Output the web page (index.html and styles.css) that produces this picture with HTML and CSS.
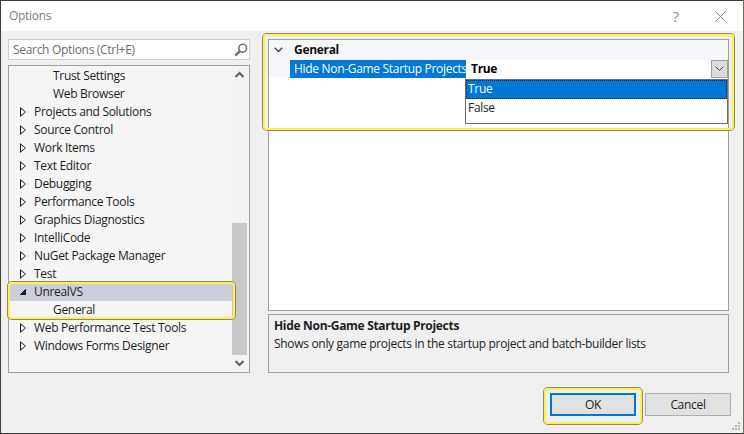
FILE: index.html
```html
<!DOCTYPE html>
<html lang="en">
<head>
<meta charset="utf-8">
<title>Options</title>
<link rel="stylesheet" href="styles.css">
</head>
<body>
<div class="window">
  <header class="titlebar">
    <span class="title">Options</span>
    <span class="help">?</span>
    <svg class="close" width="11" height="11" viewBox="0 0 11 11"><path d="M.5.5l10 10M10.5.5l-10 10" stroke="#8c8c8c" fill="none"/></svg>
  </header>
  <main class="content">
    <section class="left">
      <div class="search">
        <span class="search-text">Search Options (Ctrl+E)</span>
        <svg class="search-icon" width="14" height="14" viewBox="0 0 14 14"><circle cx="8.7" cy="5.2" r="3.9" stroke="#6f6f6f" stroke-width="1.6" fill="none"/><path d="M5.8 8.2L1.3 12.7" stroke="#6f6f6f" stroke-width="2.4" fill="none"/></svg>
      </div>
      <div class="tree">
        <ul class="tree-list">
          <li class="row child">Trust Settings</li>
          <li class="row child">Web Browser</li>
          <li class="row"><i class="arrow"></i>Projects and Solutions</li>
          <li class="row"><i class="arrow"></i>Source Control</li>
          <li class="row"><i class="arrow"></i>Work Items</li>
          <li class="row"><i class="arrow"></i>Text Editor</li>
          <li class="row"><i class="arrow"></i>Debugging</li>
          <li class="row"><i class="arrow"></i>Performance Tools</li>
          <li class="row"><i class="arrow"></i>Graphics Diagnostics</li>
          <li class="row"><i class="arrow"></i>IntelliCode</li>
          <li class="row"><i class="arrow"></i>NuGet Package Manager</li>
          <li class="row"><i class="arrow"></i>Test</li>
          <li class="row selected"><i class="arrow open"></i>UnrealVS</li>
          <li class="row child">General</li>
          <li class="row"><i class="arrow"></i>Web Performance Test Tools</li>
          <li class="row"><i class="arrow"></i>Windows Forms Designer</li>
        </ul>
        <div class="scrollbar">
          <svg class="sb-btn" width="15" height="17" viewBox="0 0 15 17"><path d="M3.5 11l4-4 4 4" stroke="#606060" stroke-width="2" fill="none"/></svg>
          <div class="sb-track"><div class="sb-thumb"></div></div>
          <svg class="sb-btn" width="15" height="17" viewBox="0 0 15 17"><path d="M3.5 6l4 4 4-4" stroke="#606060" stroke-width="2" fill="none"/></svg>
        </div>
      </div>
    </section>
    <section class="right">
      <div class="grid">
        <div class="grid-head">
          <svg class="chev" width="9" height="6" viewBox="0 0 9 6"><path d="M.8.8l3.7 3.7L8.2.8" stroke="#444" stroke-width="1.4" fill="none"/></svg>
          <b>General</b>
        </div>
        <div class="grid-row">
          <div class="gutter"></div>
          <div class="prop-name">Hide Non-Game Startup Projects</div>
          <div class="prop-value"><b>True</b>
            <span class="drop-btn"><svg width="9" height="6" viewBox="0 0 9 6"><path d="M.8.8l3.7 3.7L8.2.8" stroke="#444" fill="none"/></svg></span>
          </div>
        </div>
        <ul class="dropdown">
          <li class="opt active">True</li>
          <li class="opt">False</li>
        </ul>
      </div>
      <div class="desc">
        <b>Hide Non-Game Startup Projects</b>
        <p class="desc-text">Shows only game projects in the startup project and batch-builder lists</p>
      </div>
    </section>
  </main>
  <footer class="footer">
    <button class="btn primary">OK</button>
    <button class="btn">Cancel</button>
  </footer>
  <svg class="grip" width="9" height="9" viewBox="0 0 9 9" fill="#b4b4b4"><rect x="6" y="0" width="2" height="2"/><rect x="3" y="3" width="2" height="2"/><rect x="6" y="3" width="2" height="2"/><rect x="0" y="6" width="2" height="2"/><rect x="3" y="6" width="2" height="2"/><rect x="6" y="6" width="2" height="2"/></svg>
  <div class="mark mark-grid"></div>
  <div class="mark mark-tree"></div>
  <div class="mark mark-ok"></div>
</div>
</body>
</html>
```
FILE: styles.css
```css
* { box-sizing: border-box; }
html, body { margin: 0; padding: 0; }
body { width: 744px; height: 434px; overflow: hidden; background: #6a7048; }
.window {
  position: relative; width: 743px; height: 434px;
  background: #f0f0f0; border: 1px solid #3c3c3c; border-right: 0;
  font: 12px/18px "Open Sans", "Noto Sans", sans-serif; letter-spacing: -0.31px; color: #1e1e1e;
  display: flex; flex-direction: column;
}
.titlebar { height: 30px; background: #fff; display: flex; align-items: center; padding: 0 17px 0 8px; flex: none; }
.title { color: #7b7b7b; flex: 1; }
.help { color: #8c8c8c; font-size: 15px; margin-right: 36px; }
.content { flex: 1; display: flex; padding: 8px 14px 0 7px; gap: 18px; min-height: 0; }
.left { width: 242px; flex: none; display: flex; flex-direction: column; gap: 5px; }
.search { height: 21px; background: #fff; border: 1px solid #cccedb; display: flex; align-items: center; justify-content: space-between; padding: 0 1px 0 4px; color: #6d6d6d; }
.tree { height: 308px; border: 1px solid #a0a0a0; background: #f5f5f5; display: flex; }
.tree-list { list-style: none; margin: 0; padding: 1px 0 0; flex: 1; min-width: 0; }
.row { height: 18px; display: flex; align-items: center; padding: 0 0 0 25px; white-space: nowrap; }
.row.child { padding-left: 44px; }
.row.selected { background: #cccedb; }
.arrow { width: 0; height: 0; margin: -1px 8px 0 -14px; border-left: 6px solid #222; border-top: 5px solid transparent; border-bottom: 5px solid transparent; position: relative; }
.arrow::after { content: ""; position: absolute; left: -5px; top: -3px; border-left: 4px solid #f5f5f5; border-top: 3px solid transparent; border-bottom: 3px solid transparent; }
.arrow.open { width: 7px; height: 7px; border: 0; background: linear-gradient(135deg, transparent 50%, #1e1e1e 50%); margin: -1px 8px 0 -15px; }
.arrow.open::after { display: none; }
.scrollbar { width: 15px; flex: none; display: flex; flex-direction: column; background: #f3f3f3; margin-right: 2px; }
.sb-btn { flex: none; }
.sb-track { flex: 1; display: flex; flex-direction: column; justify-content: flex-end; }
.sb-thumb { height: 132px; background: #c8c8c8; }
.right { flex: 1; display: flex; flex-direction: column; gap: 3px; min-width: 0; }
.grid { position: relative; height: 272px; background: #fff; border: 1px solid #a0a0a0; }
.grid-head { height: 20px; background: #f5f7fc; display: flex; align-items: center; padding-left: 5px; gap: 11px; color: #111; }
.grid-row { height: 18px; display: flex; }
.gutter { width: 21px; background: #f5f7fc; flex: none; }
.prop-name { width: 176px; flex: none; background: #0078d7; color: #fff; overflow: hidden; white-space: nowrap; padding-left: 4px; }
.prop-value { flex: 1; display: flex; justify-content: space-between; padding-left: 5px; color: #000; }
.drop-btn { width: 17px; height: 18px; background: #dcdcdc; border: 1px solid #a0a0a0; display: flex; align-items: center; justify-content: center; }
.dropdown { position: absolute; left: 196px; top: 39px; right: 0; height: 45px; margin: 0; padding: 0; list-style: none; background: #fff; border: 1px solid #6e6e6e; }
.opt { height: 18px; padding-left: 2px; line-height: 17px; }
.opt.active { height: 19px; line-height: 18px; background: #0078d7; color: #fff; outline: 1px dotted #222; outline-offset: -1px; }
.desc { height: 59px; border: 1px solid #a0a0a0; padding: 2px 5px; }
.desc-text { margin: 0; }
.footer { height: 60px; flex: none; display: flex; justify-content: flex-end; gap: 9px; padding: 20px 12px 0 0; }
.btn { width: 86px; height: 23px; background: #e1e1e1; border: 1px solid #adadad; font: inherit; letter-spacing: inherit; color: #1e1e1e; padding: 0; }
.btn.primary { border: 2px solid #0078d7; }
.grip { position: absolute; right: 2px; bottom: 2px; }
.mark { position: absolute; border: 2px solid #fff04a; border-radius: 4px; box-shadow: 0 0 0 1px #8a8a70; }
.mark-grid { left: 262px; top: 33px; width: 471px; height: 96px; }
.mark-tree { left: 7px; top: 281px; width: 227px; height: 37px; }
.mark-ok { left: 543px; top: 387px; width: 98px; height: 36px; }
```
